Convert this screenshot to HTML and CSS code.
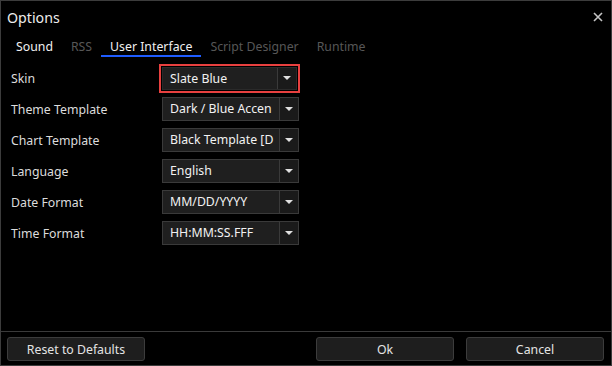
FILE: index.html
```html
<!DOCTYPE html>
<html lang="en">
<head>
    <meta charset="UTF-8">
    <title>Options</title>
    <link rel="stylesheet" href="styles.css">
</head>
<body>
    <div class="dialog">
        <div class="titlebar">
            <span class="title">Options</span>
            <svg class="close" width="10" height="10" viewBox="0 0 10 10">
                <path d="M1 1 L9 9 M9 1 L1 9" stroke="#c4c4c4" stroke-width="1.6"/>
            </svg>
        </div>
        <div class="tabs">
            <span class="tab">Sound</span>
            <span class="tab disabled">RSS</span>
            <span class="tab active">User Interface</span>
            <span class="tab disabled">Script Designer</span>
            <span class="tab disabled">Runtime</span>
        </div>
        <div class="form">
            <div class="row">
                <label>Skin</label>
                <div class="focus-ring">
                    <div class="combo"><span class="value">Slate Blue</span><span class="drop"><i class="arrow"></i></span></div>
                </div>
            </div>
            <div class="row">
                <label>Theme Template</label>
                <div class="combo"><span class="value">Dark / Blue Accen</span><span class="drop"><i class="arrow"></i></span></div>
            </div>
            <div class="row">
                <label>Chart Template</label>
                <div class="combo"><span class="value">Black Template [D</span><span class="drop"><i class="arrow"></i></span></div>
            </div>
            <div class="row">
                <label>Language</label>
                <div class="combo"><span class="value">English</span><span class="drop"><i class="arrow"></i></span></div>
            </div>
            <div class="row">
                <label>Date Format</label>
                <div class="combo"><span class="value">MM/DD/YYYY</span><span class="drop"><i class="arrow"></i></span></div>
            </div>
            <div class="row">
                <label>Time Format</label>
                <div class="combo"><span class="value">HH:MM:SS.FFF</span><span class="drop"><i class="arrow"></i></span></div>
            </div>
        </div>
        <div class="footer">
            <button class="btn">Reset to Defaults</button>
            <div class="spacer"></div>
            <button class="btn">Ok</button>
            <button class="btn">Cancel</button>
        </div>
    </div>
</body>
</html>
```

FILE: styles.css
```css
body {
    margin: 0;
    background-color: #000;
    font-family: "Noto Sans", "Open Sans", sans-serif;
    font-size: 12.3px;
    color: #e4e4e4;
}

.dialog {
    width: 612px;
    height: 366px;
    box-sizing: border-box;
    border: 1px solid #3c3c3c;
    background-color: #000;
    display: flex;
    flex-direction: column;
}

.titlebar {
    height: 33px;
    display: flex;
    align-items: center;
    justify-content: space-between;
    padding: 0 8px 0 6px;
}

.title {
    font-size: 14.2px;
    color: #ececec;
}

.close {
    margin-top: -2px;
}

.tabs {
    display: flex;
    padding-left: 6px;
    height: 23px;
}

.tab {
    padding: 4px 9px 0;
    line-height: 17px;
    color: #f0f0f0;
    border-bottom: 2px solid transparent;
}

.tab.disabled {
    color: #575757;
}

.tab.active {
    border-bottom-color: #1f5cff;
}

.form {
    flex: 1;
    display: flex;
    flex-direction: column;
    gap: 7px;
    padding: 9px 0 0 10px;
}

.row {
    display: flex;
    align-items: center;
    height: 24px;
}

.row label {
    width: 151px;
    color: #dcdcdc;
}

.focus-ring {
    margin-left: -3px;
    border: 2px solid #e8403f;
    padding: 1px;
}

.combo {
    width: 137px;
    height: 24px;
    box-sizing: border-box;
    display: flex;
    background-color: #1f1f1f;
    border: 1px solid #3a3a3a;
}

.focus-ring .combo {
    width: 135px;
    height: 23px;
    border-color: #2a2a2a;
}

.value {
    flex: 1;
    overflow: hidden;
    white-space: nowrap;
    padding-left: 7px;
    line-height: 22px;
    color: #f2f2f2;
}

.drop {
    width: 18px;
    border-left: 1px solid #3a3a3a;
    background-color: #1a1a1a;
    display: flex;
    align-items: center;
    justify-content: center;
}

.arrow {
    width: 0;
    height: 0;
    border-left: 4px solid transparent;
    border-right: 4px solid transparent;
    border-top: 4px solid #e0e0e0;
}

.footer {
    border-top: 1px solid #3a3a3a;
    display: flex;
    gap: 12px;
    padding: 5px 7px 4px 6px;
}

.spacer {
    flex: 1;
}

.btn {
    width: 138px;
    height: 24px;
    background-color: #1e1e1e;
    border: 1px solid #3c3c3c;
    border-radius: 3px;
    color: #e4e4e4;
    font-family: "Noto Sans", "Open Sans", sans-serif;
    font-size: 12.3px;
    padding: 0;
}
```
